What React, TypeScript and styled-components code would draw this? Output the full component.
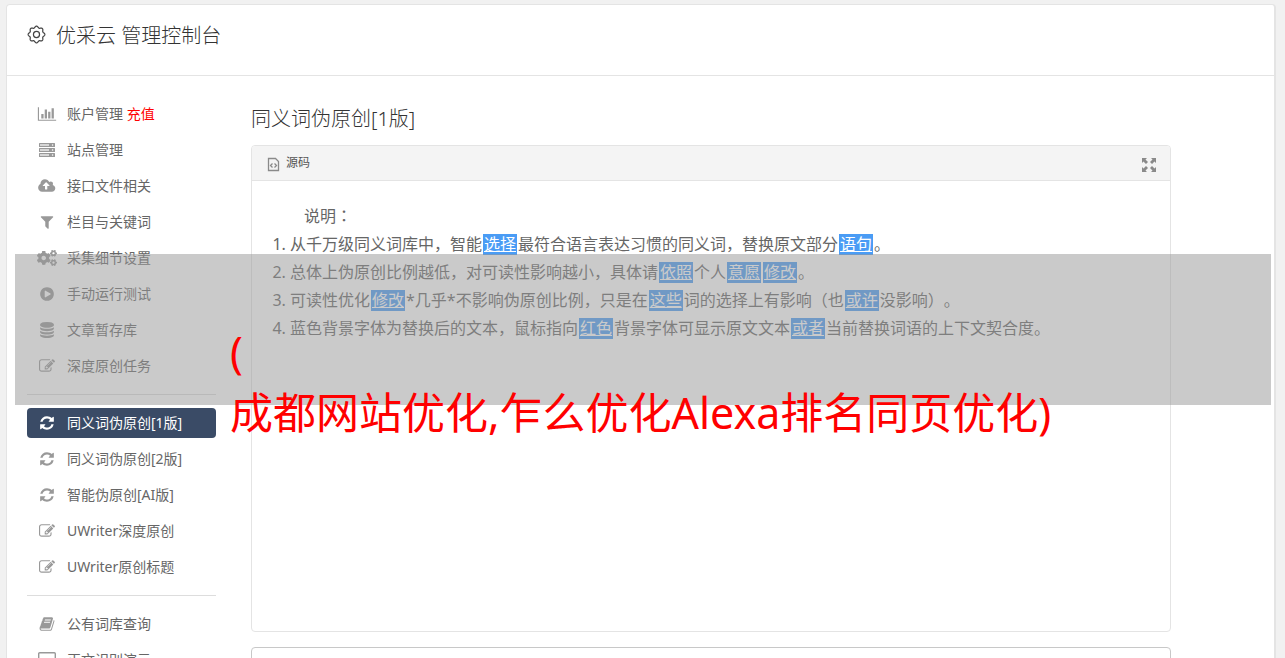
import React from "react";
import styled, { createGlobalStyle, css } from "styled-components";
import { FaCogs } from "react-icons/fa";

const GlobalStyle = createGlobalStyle`
  * { box-sizing: border-box; }
  body {
    margin: 0;
    background: #f1f1f1;
    color: #666;
    font-family: "Noto Sans", "Noto Sans CJK SC", sans-serif;
    font-weight: 400;
    text-spacing-trim: space-all;
  }
`;

const Page = styled.div`
  position: relative;
  height: 100vh;
  overflow: hidden;
  padding: 4px 9px 0 6px;
`;

const Card = styled.div`
  background: #fff;
  border: 1px solid #e4e4e4;
  border-right-width: 2px;
  border-radius: 4px;
`;

const TopBar = styled.header`
  display: flex;
  align-items: flex-start;
  gap: 10px;
  height: 71px;
  padding: 16px 20px 0;
  border-bottom: 1px solid #e4e4e4;
`;

const GearIcon = styled.svg`
  flex: none;
  width: 19px;
  height: 19px;
  margin-top: 4px;
`;

const Brand = styled.h1`
  margin: 0;
  color: #333;
  font-size: 20px;
  font-weight: 300;
  line-height: 30px;
`;

const Columns = styled.div`
  display: flex;
  align-items: flex-start;
  gap: 35px;
  padding: 23px 20px 0;
`;

const Sidebar = styled.nav`
  flex: none;
  width: 189px;
`;

const Group = styled.ul`
  margin: 0;
  padding: 0;
  list-style: none;

  & + & {
    margin-top: 13px;
    padding-top: 13px;
    border-top: 1px solid #ddd;
  }
`;

const NavLink = styled.a<{ $active?: boolean }>`
  display: flex;
  align-items: center;
  gap: 10px;
  height: 30px;
  margin-bottom: 6px;
  padding: 0 10px;
  border-radius: 4px;
  color: #666;
  font-size: 14px;
  line-height: 20px;
  text-decoration: none;
  white-space: pre;

  svg {
    flex: none;
    width: 20px;
    height: 16px;
    color: #999;
  }

  ${(p) =>
    p.$active &&
    css`
      background: #3a4b66;
      color: #fff;
      svg { color: #fff; }
    `}
`;

const Recharge = styled.span`
  color: #f00;
`;

const Main = styled.main`
  flex: 1;
  min-width: 0;
  max-width: 920px;
`;

const Title = styled.h2`
  margin: 0 0 12px;
  padding-top: 6px;
  color: #333;
  font-size: 20px;
  font-weight: 300;
  line-height: 28px;
`;

const Editor = styled.section`
  border: 1px solid #e4e4e4;
  border-radius: 4px;
  overflow: hidden;
`;

const Toolbar = styled.div`
  display: flex;
  align-items: center;
  justify-content: space-between;
  height: 35px;
  padding: 0 13px 0 15px;
  background: #f4f4f4;
  border-bottom: 1px solid #e4e4e4;
`;

const ToolButton = styled.button`
  display: flex;
  align-items: center;
  gap: 6px;
  padding: 0;
  border: 0;
  background: none;
  color: #555;
  font: inherit;
  font-size: 12px;
  line-height: 20px;

  svg { color: #8a8a8a; display: block; margin-top: 3px; }
`;

const Content = styled.div`
  min-height: 450px;
  padding: 20px;
  font-size: 16px;
  line-height: 28px;
`;

const Lead = styled.p`
  margin: 0;
  padding-left: 32px;
`;

const Colon = styled.span`
  font-family: "Noto Sans CJK JP", sans-serif;
`;

const Rules = styled.ol`
  margin: 0;
  padding-left: 18px;
`;

const Swap = styled.a`
  display: inline-block;
  margin: 0 1px;
  padding: 0 1px;
  background: #4a9cf5;
  color: #fff;
  line-height: 21px;
  text-decoration: underline;
`;

const Result = styled.textarea`
  display: block;
  width: 100%;
  height: 120px;
  margin-top: 15px;
  border: 1px solid #c8c8c8;
  border-radius: 4px;
  resize: none;
`;

const Banner = styled.div`
  position: absolute;
  top: 254px;
  left: 15px;
  right: 14px;
  height: 151px;
  padding: 67px 0 0 215px;
  background: rgba(150, 150, 150, 0.5);
  color: #f00;
  font-size: 43px;
  line-height: 61px;
  white-space: nowrap;
`;

const FA = {
  chart:
    "M640 896v512h-256v-512h256zm384-512v1024h-256v-1024h256zm1024 1152v128h-2048v-1536h128v1408h1920zm-640-896v768h-256v-768h256zm384-384v1152h-256v-1152h256z",
  cloud:
    "M1216 864q0-14-9-23l-352-352q-9-9-23-9t-23 9l-351 351q-10 12-10 24 0 14 9 23t23 9h224v352q0 13 9.5 22.5t22.5 9.5h192q13 0 22.5-9.5t9.5-22.5v-352h224q13 0 22.5-9.5t9.5-22.5zm640 288q0 159-112.5 271.5t-271.5 112.5h-1088q-185 0-316.5-131.5t-131.5-316.5q0-130 70-240t188-165q-2-30-2-43 0-212 150-362t362-150q156 0 285.5 87t188.5 231q71-62 166-62 106 0 181 75t75 181q0 76-41 138 130 31 213.5 135.5t83.5 238.5z",
  filter:
    "M1595 295q17 41-14 70l-493 493v742q0 42-39 59-13 5-25 5-27 0-45-19l-256-256q-19-19-19-45v-486l-493-493q-31-29-14-70 17-39 59-39h1280q42 0 59 39z",
  play:
    "M896 128q209 0 385.5 103t279.5 279.5 103 385.5-103 385.5-279.5 279.5-385.5 103-385.5-103-279.5-279.5-103-385.5 103-385.5 279.5-279.5 385.5-103zm384 823q32-18 32-55t-32-55l-544-320q-31-19-64-1-32 19-32 56v640q0 37 32 56 16 8 32 8 17 0 32-9z",
  database:
    "M896 768q237 0 443-43t325-127v170q0 69-103 128t-280 93.5-385 34.5-385-34.5-280-93.5-103-128v-170q119 84 325 127t443 43zm0 768q237 0 443-43t325-127v170q0 69-103 128t-280 93.5-385 34.5-385-34.5-280-93.5-103-128v-170q119 84 325 127t443 43zm0-384q237 0 443-43t325-127v170q0 69-103 128t-280 93.5-385 34.5-385-34.5-280-93.5-103-128v-170q119 84 325 127t443 43zm0-1152q208 0 385 34.5t280 93.5 103 128v128q0 69-103 128t-280 93.5-385 34.5-385-34.5-280-93.5-103-128v-128q0-69 103-128t280-93.5 385-34.5z",
  edit:
    "M888 1184l116-116-152-152-116 116v56h96v96h56zm440-720q-16-16-33 1l-350 350q-17 17-1 33t33-1l350-350q17-17 1-33zm80 594v190q0 119-84.5 203.5t-203.5 84.5h-832q-119 0-203.5-84.5t-84.5-203.5v-832q0-119 84.5-203.5t203.5-84.5h832q63 0 117 25 15 7 18 23 3 17-9 29l-49 49q-14 14-32 8-23-6-45-6h-832q-66 0-113 47t-47 113v832q0 66 47 113t113 47h832q66 0 113-47t47-113v-126q0-13 9-22l64-64q15-15 35-7t20 29zm-96-738l288 288-672 672h-288v-288zm444 132l-92 92-288-288 92-92q28-28 68-28t68 28l152 152q28 28 28 68t-28 68z",
  refresh:
    "M1639 1056q0 5-1 7-64 268-268 434.5t-478 166.5q-146 0-282.5-55t-243.5-157l-129 129q-19 19-45 19t-45-19-19-45v-448q0-26 19-45t45-19h448q26 0 45 19t19 45-19 45l-137 137q71 66 161 102t187 36q134 0 250-65t186-179q11-17 53-117 8-23 30-23h192q13 0 22.5 9.5t9.5 22.5zm25-800v448q0 26-19 45t-45 19h-448q-26 0-45-19t-19-45 19-45l138-138q-148-137-349-137-134 0-250 65t-186 179q-11 17-53 117-8 23-30 23h-199q-13 0-22.5-9.5t-9.5-22.5v-7q65-268 270-434.5t480-166.5q146 0 284 55.5t245 156.5l130-129q19-19 45-19t45 19 19 45z",
  book:
    "M1703 478q40 57 18 129l-275 906q-19 64-76.5 107.5t-122.5 43.5h-923q-77 0-148.5-53.5t-99.5-131.5q-24-67-2-127 0-4 3-27t4-37q1-8-3-21.5t-3-19.5q2-11 8-21t16.5-23.5 16.5-23.5q23-38 45-91.5t30-91.5q3-10 .5-30t-.5-28q3-11 17-28t17-23q21-36 42-92t25-90q1-9-2.5-32t.5-28q4-13 22-30.5t22-22.5q19-26 42.5-84.5t27.5-96.5q1-8-3-25.5t-2-26.5q2-8 9-18t18-23 17-21q8-12 16.5-30.5t15-35 16-36 19.5-32 26.5-23.5 36-11.5 47.5 5.5l-1 3q38-9 51-9h761q74 0 114 56t18 130l-274 906q-36 119-71.5 153.5t-128.5 34.5h-869q-27 0-38 15-11 16-1 43 24 70 144 70h923q29 0 56-15.5t35-41.5l300-987q7-22 5-57 38 15 59 43zm-1064 2q-4 13 2 22.5t20 9.5h608q13 0 25.5-9.5t16.5-22.5l21-64q4-13-2-22.5t-20-9.5h-608q-13 0-25.5 9.5t-16.5 22.5zm-83 256q-4 13 2 22.5t20 9.5h608q13 0 25.5-9.5t16.5-22.5l21-64q4-13-2-22.5t-20-9.5h-608q-13 0-25.5 9.5t-16.5 22.5z",
};

type GlyphName = keyof typeof FA | "server" | "cogs" | "desktop";

function Glyph({ name }: { name: GlyphName }) {
  if (name === "cogs") return <FaCogs aria-hidden />;
  if (name === "server")
    return (
      <svg viewBox="0 0 20 16" fill="currentColor" aria-hidden>
        {[1, 6, 11].map((y) => (
          <g key={y}>
            <rect x="2" y={y} width="16" height="4" rx="0.5" />
            <path d={`M3 ${y + 1}h9v2h-9z`} fill="#fff" opacity="0.6" />
            <circle cx="15.6" cy={y + 2} r="0.8" fill="#fff" />
          </g>
        ))}
      </svg>
    );
  if (name === "desktop")
    return (
      <svg viewBox="0 0 20 16" fill="none" stroke="currentColor" aria-hidden>
        <rect x="1.7" y="0.7" width="16.6" height="11.6" rx="1" strokeWidth="1.4" />
        <path d="M6 15h8M10 12v3" strokeWidth="1.4" />
      </svg>
    );
  return (
    <svg viewBox={name === "chart" ? "0 0 2048 1792" : name === "cloud" ? "0 0 1856 1792" : "0 0 1792 1792"} fill="currentColor" aria-hidden>
      <path d={FA[name]} />
    </svg>
  );
}

type Item = { icon: GlyphName; label: string; extra?: string; active?: boolean };

const groups: Item[][] = [
  [
    { icon: "chart", label: "账户管理 ", extra: "充值" },
    { icon: "server", label: "站点管理" },
    { icon: "cloud", label: "接口文件相关" },
    { icon: "filter", label: "栏目与关键词" },
    { icon: "cogs", label: "采集细节设置" },
    { icon: "play", label: "手动运行测试" },
    { icon: "database", label: "文章暂存库" },
    { icon: "edit", label: "深度原创任务" },
  ],
  [
    { icon: "refresh", label: "同义词伪原创[1版]", active: true },
    { icon: "refresh", label: "同义词伪原创[2版]" },
    { icon: "refresh", label: "智能伪原创[AI版]" },
    { icon: "edit", label: "UWriter深度原创" },
    { icon: "edit", label: "UWriter原创标题" },
  ],
  [
    { icon: "book", label: "公有词库查询" },
    { icon: "desktop", label: "正文识别演示" },
  ],
];

// Scalloped outline of the gear: eight rounded teeth around the centre.
const gearPath = (() => {
  const pts: string[] = [];
  for (let i = 0; i <= 128; i++) {
    const a = (i / 128) * Math.PI * 2;
    const r = 8 + 0.8 * Math.cos(a * 8);
    pts.push(`${(10 + r * Math.sin(a)).toFixed(2)} ${(10 - r * Math.cos(a)).toFixed(2)}`);
  }
  return `M${pts.join("L")}Z`;
})();

export default function App() {
  return (
    <>
      <GlobalStyle />
      <Page>
        <Card>
          <TopBar>
            <GearIcon viewBox="0 0 20 20" fill="none" stroke="#444" strokeWidth="1.3" aria-hidden>
              <path d={gearPath} />
              <circle cx="10" cy="10" r="3.2" />
            </GearIcon>
            <Brand>优采云 管理控制台</Brand>
          </TopBar>
          <Columns>
            <Sidebar>
              {groups.map((items, i) => (
                <Group key={i}>
                  {items.map((it) => (
                    <li key={it.label}>
                      <NavLink href="#" $active={it.active}>
                        <Glyph name={it.icon} />
                        <span>
                          {it.label}
                          {it.extra && <Recharge>{it.extra}</Recharge>}
                        </span>
                      </NavLink>
                    </li>
                  ))}
                </Group>
              ))}
            </Sidebar>
            <Main>
              <Title>同义词伪原创[1版]</Title>
              <Editor>
                <Toolbar>
                  <ToolButton type="button">
                    <svg width="13" height="15" viewBox="0 0 13 15" fill="none" stroke="currentColor" aria-hidden>
                      <path d="M1.500 1.500h7l3 3v9h-10z" strokeWidth="1.3" />
                      <path d="M5.500 6.500l-2 2 2 2M7.500 6.500l2 2-2 2" strokeWidth="1.3" />
                    </svg>
                    源码
                  </ToolButton>
                  <ToolButton type="button" aria-label="全屏">
                    <svg width="16" height="16" viewBox="0 0 16 16" fill="currentColor" aria-hidden>
                      <path d="M1 1h5L4.500 2.500l2.500 2.500-2 2-2.500-2.500L1 6zM15 1v5l-1.500-1.500L11 7 9 5l2.500-2.500L10 1zM1 15v-5l1.500 1.500L5 9l2 2-2.500 2.500L6 15zM15 15h-5l1.500-1.500L9 11l2-2 2.500 2.500L15 10z" />
                    </svg>
                  </ToolButton>
                </Toolbar>
                <Content>
                  <Lead>
                    说明<Colon>：</Colon>
                  </Lead>
                  <Rules>
                    <li>
                      从千万级同义词库中，智能<Swap href="#">选择</Swap>最符合语言表达习惯的同义词，替换原文部分<Swap href="#">语句</Swap>。
                    </li>
                    <li>
                      总体上伪原创比例越低，对可读性影响越小，具体请<Swap href="#">依照</Swap>个人<Swap href="#">意愿</Swap><Swap href="#">修改</Swap>。
                    </li>
                    <li>
                      可读性优化<Swap href="#">修改</Swap>*几乎*不影响伪原创比例，只是在<Swap href="#">这些</Swap>词的选择上有影响（也<Swap href="#">或许</Swap>没影响）。
                    </li>
                    <li>
                      蓝色背景字体为替换后的文本，鼠标指向<Swap href="#">红色</Swap>背景字体可显示原文文本<Swap href="#">或者</Swap>当前替换词语的上下文契合度。
                    </li>
                  </Rules>
                </Content>
              </Editor>
              <Result aria-label="结果" />
            </Main>
          </Columns>
        </Card>
        <Banner>
          (<br />
          成都网站优化,乍么优化Alexa排名同页优化)
        </Banner>
      </Page>
    </>
  );
}
